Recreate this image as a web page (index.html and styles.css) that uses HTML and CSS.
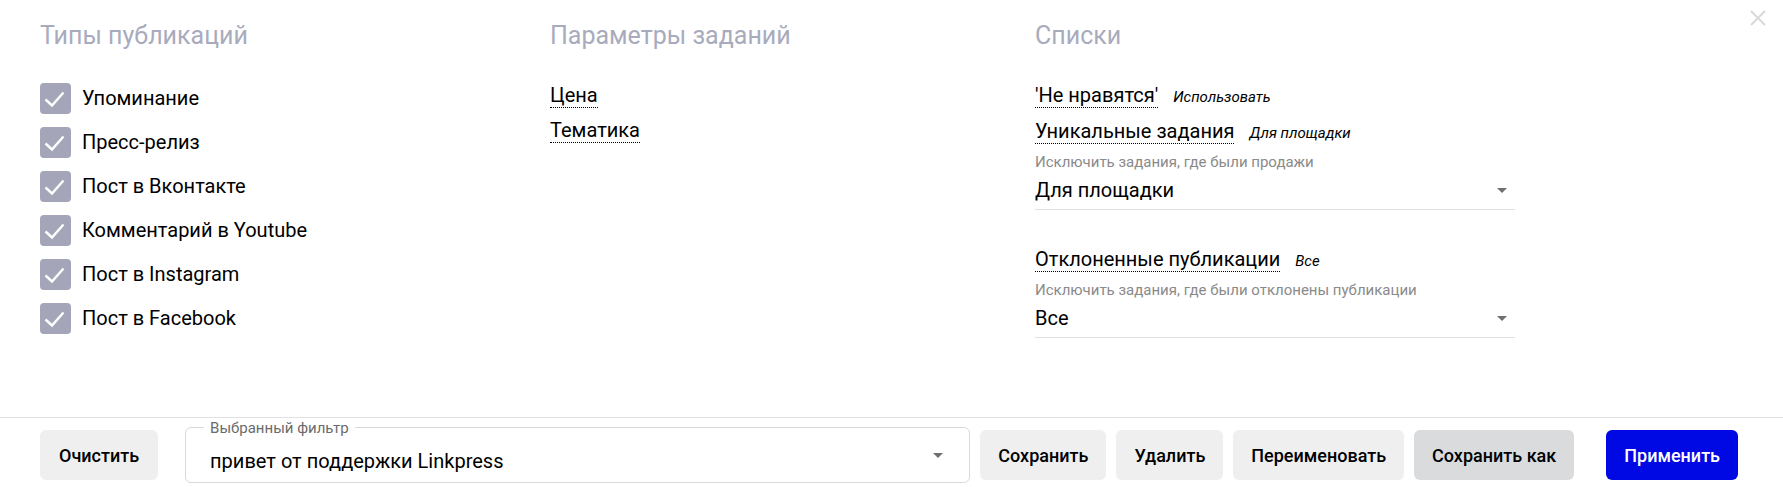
FILE: index.html
```html
<!DOCTYPE html>
<html lang="ru">
<head>
  <meta charset="UTF-8" />
  <meta name="viewport" content="width=device-width, initial-scale=1.0"/>
  <title>Фильтр заданий</title>
  <link rel="stylesheet" href="styles.css">
</head>
<body>
  <div class="filter-panel">
    <button class="close-button" aria-label="Закрыть">
      <svg width="16" height="16" viewBox="0 0 16 16">
        <path d="M1 1L15 15M15 1L1 15" stroke="#d9d9d9" stroke-width="2" fill="none"/>
      </svg>
    </button>

    <div class="filter-columns">
      <section class="filter-col col-types">
        <h3 class="col-title">Типы публикаций</h3>
        <ul class="check-list">
          <li class="check-item"><span class="check-box"><svg width="31" height="31" viewBox="0 0 31 31"><path d="M5.5 16.5L12 22.5L23.5 9.5" stroke="#fff" stroke-width="2.4" fill="none"/></svg></span>Упоминание</li>
          <li class="check-item"><span class="check-box"><svg width="31" height="31" viewBox="0 0 31 31"><path d="M5.5 16.5L12 22.5L23.5 9.5" stroke="#fff" stroke-width="2.4" fill="none"/></svg></span>Пресс-релиз</li>
          <li class="check-item"><span class="check-box"><svg width="31" height="31" viewBox="0 0 31 31"><path d="M5.5 16.5L12 22.5L23.5 9.5" stroke="#fff" stroke-width="2.4" fill="none"/></svg></span>Пост в Вконтакте</li>
          <li class="check-item"><span class="check-box"><svg width="31" height="31" viewBox="0 0 31 31"><path d="M5.5 16.5L12 22.5L23.5 9.5" stroke="#fff" stroke-width="2.4" fill="none"/></svg></span>Комментарий в Youtube</li>
          <li class="check-item"><span class="check-box"><svg width="31" height="31" viewBox="0 0 31 31"><path d="M5.5 16.5L12 22.5L23.5 9.5" stroke="#fff" stroke-width="2.4" fill="none"/></svg></span>Пост в Instagram</li>
          <li class="check-item"><span class="check-box"><svg width="31" height="31" viewBox="0 0 31 31"><path d="M5.5 16.5L12 22.5L23.5 9.5" stroke="#fff" stroke-width="2.4" fill="none"/></svg></span>Пост в Facebook</li>
        </ul>
      </section>

      <section class="filter-col col-params">
        <h3 class="col-title">Параметры заданий</h3>
        <div class="param-list">
          <div class="param-row"><span class="dotted-link">Цена</span></div>
          <div class="param-row"><span class="dotted-link">Тематика</span></div>
        </div>
      </section>

      <section class="filter-col col-lists">
        <h3 class="col-title">Списки</h3>
        <div class="param-list">
          <div class="param-row"><span class="dotted-link">'Не нравятся'</span><em class="param-value">Использовать</em></div>
          <div class="param-row"><span class="dotted-link">Уникальные задания</span><em class="param-value">Для площадки</em></div>
        </div>
        <div class="field-hint">Исключить задания, где были продажи</div>
        <div class="select-line">Для площадки<span class="caret"></span></div>

        <div class="param-row row-spaced"><span class="dotted-link">Отклоненные публикации</span><em class="param-value">Все</em></div>
        <div class="field-hint">Исключить задания, где были отклонены публикации</div>
        <div class="select-line">Все<span class="caret"></span></div>
      </section>
    </div>

    <footer class="filter-actions">
      <button class="action-button">Очистить</button>
      <div class="saved-filter">
        <span class="saved-filter-label">Выбранный фильтр</span>
        <span class="saved-filter-value">привет от поддержки Linkpress</span>
        <span class="caret"></span>
      </div>
      <button class="action-button">Сохранить</button>
      <button class="action-button">Удалить</button>
      <button class="action-button">Переименовать</button>
      <button class="action-button action-active">Сохранить как</button>
      <button class="action-button action-primary">Применить</button>
    </footer>
  </div>
</body>
</html>
```

FILE: styles.css
```css
* {
  margin: 0;
  padding: 0;
  box-sizing: border-box;
}

body {
  font-family: Roboto, 'Liberation Sans', Arial, sans-serif;
  background-color: #ffffff;
  color: #000000;
  height: 100vh;
  overflow: hidden;
}

.filter-panel {
  position: relative;
  height: 100%;
  display: flex;
  flex-direction: column;
}

.close-button {
  position: absolute;
  top: 10px;
  right: 17px;
  background: none;
  border: none;
  cursor: pointer;
  display: flex;
}

.filter-columns {
  height: 417px;
  padding: 21px 40px 0;
  display: grid;
  grid-template-columns: 510px 485px 1fr;
}

.col-title {
  font-size: 25px;
  font-weight: 400;
  line-height: 29px;
  color: #a8abbd;
}

.check-list {
  list-style: none;
  margin-top: 33px;
  display: flex;
  flex-direction: column;
  gap: 13px;
}

.check-item {
  display: flex;
  align-items: center;
  gap: 11px;
  font-size: 20px;
  line-height: 31px;
}

.check-box {
  width: 31px;
  height: 31px;
  border-radius: 4px;
  background-color: #a4a5b8;
  display: flex;
}

.param-list {
  margin-top: 33px;
  display: flex;
  flex-direction: column;
  gap: 10px;
}

.param-row {
  display: flex;
  align-items: baseline;
  font-size: 20px;
  line-height: 24px;
}

.row-spaced {
  margin-top: 37px;
}

.dotted-link {
  border-bottom: 1px dotted #000;
  cursor: pointer;
}

.param-value {
  margin-left: 15px;
  font-size: 15px;
}

.field-hint {
  margin-top: 8px;
  font-size: 15px;
  line-height: 18px;
  color: #8a8a8a;
}

.select-line {
  width: 480px;
  margin-top: 7px;
  padding: 0 8px 7px 0;
  font-size: 20px;
  line-height: 24px;
  border-bottom: 1px solid #e0e0e0;
  display: flex;
  align-items: center;
  justify-content: space-between;
}

.caret {
  width: 0;
  height: 0;
  border-left: 5px solid transparent;
  border-right: 5px solid transparent;
  border-top: 5px solid #6f6f6f;
}

.filter-actions {
  flex: 1;
  border-top: 1px solid #e2e2e2;
  padding: 9px 45px 0 40px;
  display: flex;
  align-items: flex-start;
  gap: 10px;
}

.action-button {
  height: 50px;
  margin-top: 3px;
  padding: 0 18px;
  border: none;
  border-radius: 6px;
  background-color: #efefef;
  color: #000;
  font-family: inherit;
  font-size: 18px;
  font-weight: 500;
  cursor: pointer;
}

.action-button:first-child {
  padding: 0 19px;
  margin-right: 17px;
}

.action-active {
  background-color: #dadbdd;
}

.action-primary {
  margin-left: 22px;
  background-color: #0008e4;
  color: #fff;
}

.saved-filter {
  position: relative;
  flex: 1;
  height: 56px;
  border: 1px solid #d9d9d9;
  border-radius: 6px;
  padding: 0 26px 0 24px;
  display: flex;
  align-items: center;
  justify-content: space-between;
}

.saved-filter-label {
  position: absolute;
  top: -9px;
  left: 18px;
  padding: 0 6px;
  background-color: #fff;
  font-size: 15px;
  line-height: 18px;
  color: #6b6b6b;
}

.saved-filter-value {
  padding-top: 12px;
  font-size: 20px;
}
```
